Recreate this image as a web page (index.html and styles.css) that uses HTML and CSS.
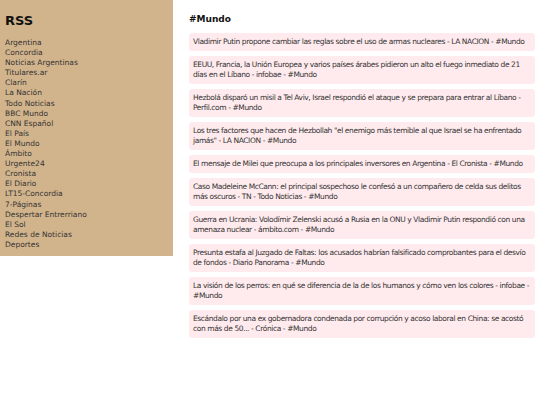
FILE: index.html
```html
<!DOCTYPE html>
<html lang="es">
<head>
<meta charset="utf-8">
<title>RSS</title>
<link rel="stylesheet" href="styles.css">
</head>
<body>
<div class="layout">
  <aside class="sidebar">
    <h1 class="brand">RSS</h1>
    <ul class="feeds">
      <li>Argentina</li>
      <li>Concordia</li>
      <li>Noticias Argentinas</li>
      <li>Titulares.ar</li>
      <li>Clarín</li>
      <li>La Nación</li>
      <li>Todo Noticias</li>
      <li>BBC Mundo</li>
      <li>CNN Español</li>
      <li>El País</li>
      <li>El Mundo</li>
      <li>Ámbito</li>
      <li>Urgente24</li>
      <li>Cronista</li>
      <li>El Diario</li>
      <li>LT15-Concordia</li>
      <li>7-Páginas</li>
      <li>Despertar Entrerriano</li>
      <li>El Sol</li>
      <li>Redes de Noticias</li>
      <li>Deportes</li>
    </ul>
  </aside>
  <main class="content">
    <h2 class="section-title">#Mundo</h2>
    <div class="news">
      <div class="item">Vladimir Putin propone cambiar las reglas sobre el uso de armas nucleares - LA NACION - #Mundo</div>
      <div class="item">EEUU, Francia, la Unión Europea y varios países árabes pidieron un alto el fuego inmediato de 21 días en el Líbano - infobae - #Mundo</div>
      <div class="item">Hezbolá disparó un misil a Tel Aviv, Israel respondió el ataque y se prepara para entrar al Líbano - Perfil.com - #Mundo</div>
      <div class="item">Los tres factores que hacen de Hezbollah "el enemigo más temible al que Israel se ha enfrentado jamás" - LA NACION - #Mundo</div>
      <div class="item">El mensaje de Milei que preocupa a los principales inversores en Argentina - El Cronista - #Mundo</div>
      <div class="item">Caso Madeleine McCann: el principal sospechoso le confesó a un compañero de celda sus delitos más oscuros - TN - Todo Noticias - #Mundo</div>
      <div class="item">Guerra en Ucrania: Volodímir Zelenski acusó a Rusia en la ONU y Vladimir Putin respondió con una amenaza nuclear - ámbito.com - #Mundo</div>
      <div class="item">Presunta estafa al Juzgado de Faltas: los acusados habrían falsificado comprobantes para el desvío de fondos - Diario Panorama - #Mundo</div>
      <div class="item">La visión de los perros: en qué se diferencia de la de los humanos y cómo ven los colores - infobae - #Mundo</div>
      <div class="item">Escándalo por una ex gobernadora condenada por corrupción y acoso laboral en China: se acostó con más de 50... - Crónica - #Mundo</div>
    </div>
  </main>
</div>
</body>
</html>
```
FILE: styles.css
```css
html, body {
  margin: 0;
  padding: 0;
  background: #ffffff;
}
body {
  font-family: "DejaVu Sans", Verdana, sans-serif;
  font-size: 7.5px;
  color: #333333;
}
.layout {
  display: flex;
  align-items: flex-start;
}
.sidebar {
  box-sizing: border-box;
  width: 173px;
  flex: none;
  background: #d2b48c;
  padding: 13px 5px 6px 5px;
}
.brand {
  margin: 0 0 10px 0;
  font-size: 13px;
  line-height: 15px;
  color: #111111;
  font-weight: bold;
}
.feeds {
  list-style: none;
  margin: 0;
  padding: 0;
  line-height: 10.1px;
}
.content {
  flex: 1;
  padding: 13px 5px 0 16px;
}
.section-title {
  margin: 0 0 8px 0;
  font-size: 9px;
  line-height: 12px;
  color: #111111;
  font-weight: bold;
}
.news {
  display: flex;
  flex-direction: column;
  gap: 5px;
}
.item {
  background: #ffebee;
  border-radius: 3px;
  padding: 4px 3px 4px 4px;
  line-height: 10px;
  letter-spacing: -0.4px;
}
```
